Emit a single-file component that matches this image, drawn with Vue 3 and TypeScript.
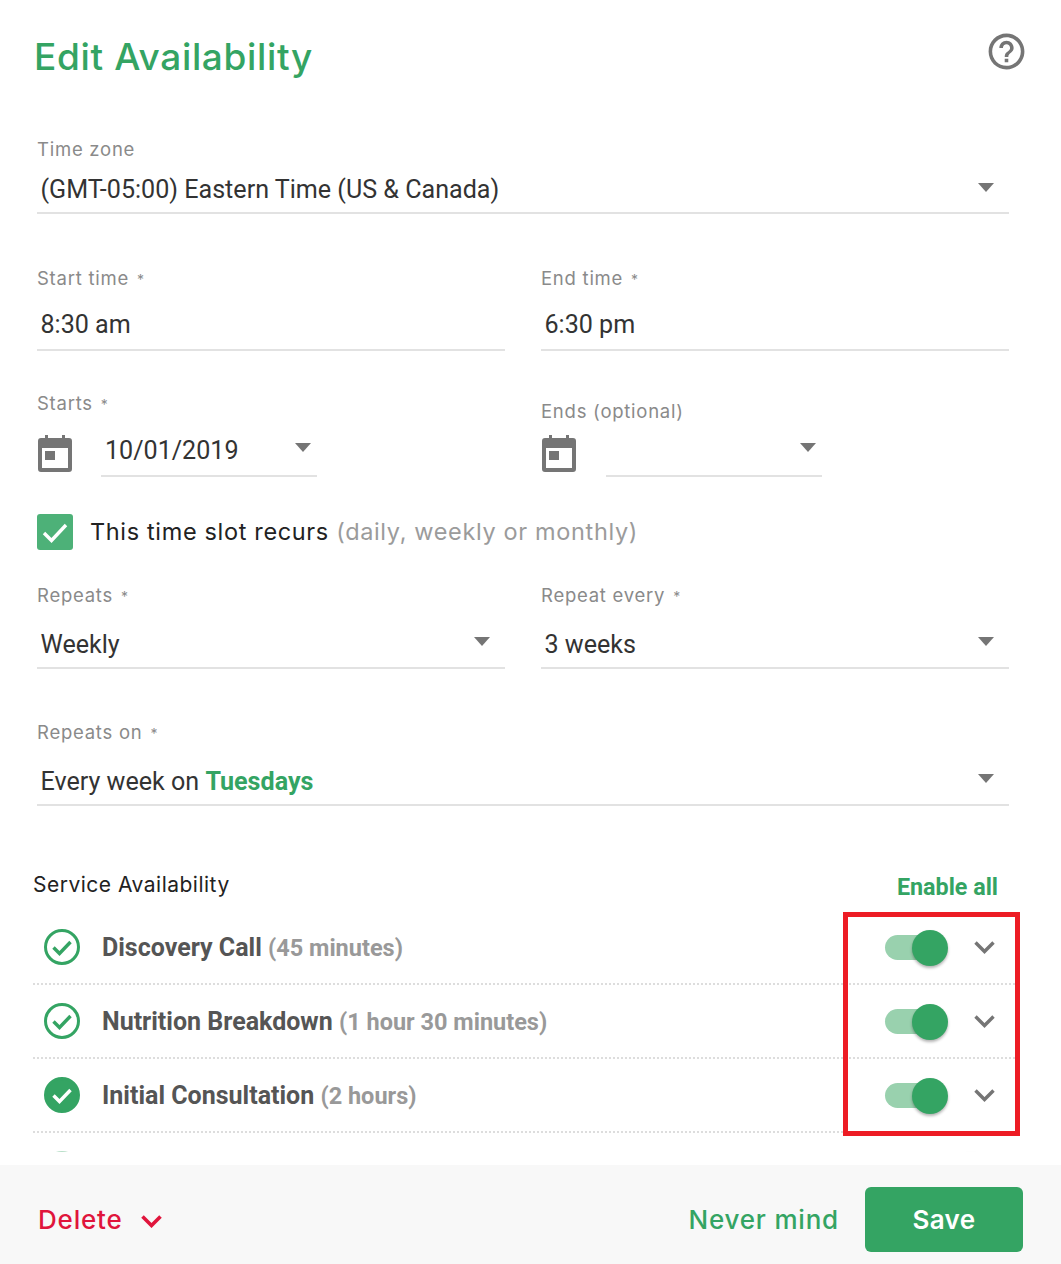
<script setup lang="ts">
interface Service { name: string; length: string; filled: boolean }
const services: Service[] = [
  { name: 'Discovery Call', length: '(45 minutes)', filled: false },
  { name: 'Nutrition Breakdown', length: '(1 hour 30 minutes)', filled: false },
  { name: 'Initial Consultation', length: '(2 hours)', filled: true },
]
</script>

<template>
  <div class="page">
    <div class="scroll">
      <header class="head">
        <h1 class="title">Edit Availability</h1>
        <svg class="help" viewBox="0 0 24 24" aria-hidden="true">
          <path fill="#757575" d="M11 18h2v-2h-2v2zm1-16C6.48 2 2 6.48 2 12s4.48 10 10 10 10-4.48 10-10S17.52 2 12 2zm0 18c-4.41 0-8-3.59-8-8s3.59-8 8-8 8 3.59 8 8-3.59 8-8 8zm0-14c-2.21 0-4 1.79-4 4h2c0-1.1.9-2 2-2s2 .9 2 2c0 2-3 1.75-3 5h2c0-2.25 3-2.5 3-5 0-2.21-1.79-4-4-4z"/>
        </svg>
      </header>

      <div class="form">
        <div class="field">
          <div class="label">Time zone</div>
          <div class="value tz">(GMT-05:00) Eastern Time (US &amp; Canada)<span class="caret"></span></div>
        </div>

        <div class="cols gap-time">
          <div class="field">
            <div class="label">Start time <span class="req">*</span></div>
            <div class="value time">8:30 am</div>
          </div>
          <div class="field">
            <div class="label">End time <span class="req">*</span></div>
            <div class="value time">6:30 pm</div>
          </div>
        </div>

        <div class="cols gap-date">
          <div class="field">
            <div class="label">Starts <span class="req">*</span></div>
            <div class="date">
              <svg class="cal" viewBox="0 0 34 37" aria-hidden="true">
                <path fill="#757575" d="M7 0h3v3h14V0h3v3h4a3 3 0 0 1 3 3v28a3 3 0 0 1-3 3H3a3 3 0 0 1-3-3V6a3 3 0 0 1 3-3h4V0zM4 13v20h26V13H4z"/>
                <rect fill="#757575" x="7" y="16" width="10" height="9"/>
              </svg>
              <div class="value dateval">10/01/2019<span class="caret"></span></div>
            </div>
          </div>
          <div class="field ends">
            <div class="label">Ends (optional)</div>
            <div class="date">
              <svg class="cal" viewBox="0 0 34 37" aria-hidden="true">
                <path fill="#757575" d="M7 0h3v3h14V0h3v3h4a3 3 0 0 1 3 3v28a3 3 0 0 1-3 3H3a3 3 0 0 1-3-3V6a3 3 0 0 1 3-3h4V0zM4 13v20h26V13H4z"/>
                <rect fill="#757575" x="7" y="16" width="10" height="9"/>
              </svg>
              <div class="value dateval short"><span class="caret"></span></div>
            </div>
          </div>
        </div>

        <div class="recur">
          <span class="box">
            <svg viewBox="0 0 36 36" aria-hidden="true"><path d="M7 19l7.5 7.5L29 11" fill="none" stroke="#fff" stroke-width="3.4"/></svg>
          </span>
          <span class="recur-text">This time slot recurs <span class="muted">(daily, weekly or monthly)</span></span>
        </div>

        <div class="cols gap-rep">
          <div class="field">
            <div class="label">Repeats <span class="req">*</span></div>
            <div class="value sel">Weekly<span class="caret"></span></div>
          </div>
          <div class="field">
            <div class="label">Repeat every <span class="req">*</span></div>
            <div class="value sel">3 weeks<span class="caret"></span></div>
          </div>
        </div>

        <div class="field gap-on">
          <div class="label">Repeats on <span class="req">*</span></div>
          <div class="value sel">Every week on <b class="green">Tuesdays</b><span class="caret"></span></div>
        </div>
      </div>

      <section class="services">
        <div class="svc-head">
          <span class="svc-title">Service Availability</span>
          <span class="enable">Enable all</span>
        </div>
        <div v-for="s in services" :key="s.name" class="row">
          <svg class="status" viewBox="0 0 36 36" aria-hidden="true">
            <circle cx="18" cy="18" r="16.5" :fill="s.filled ? '#34a463' : 'none'" stroke="#34a463" stroke-width="3"/>
            <path d="M9.5 18.5l6 6L26.5 13" fill="none" :stroke="s.filled ? '#fff' : '#34a463'" stroke-width="3.4"/>
          </svg>
          <span class="name">{{ s.name }} <span class="len">{{ s.length }}</span></span>
          <span class="toggle"><span class="knob"></span></span>
          <svg class="chev" viewBox="0 0 21 13" aria-hidden="true"><path d="M1.5 1.5l9 9 9-9" fill="none" stroke="#757575" stroke-width="3.4"/></svg>
        </div>
        <div class="row faded">
          <svg class="status" viewBox="0 0 36 36" aria-hidden="true">
            <circle cx="18" cy="18" r="16.5" fill="none" stroke="#34a463" stroke-width="3"/>
          </svg>
          <span class="name"></span>
          <span class="toggle"><span class="knob"></span></span>
        </div>
      </section>
    </div>

    <footer class="foot">
      <span class="delete">Delete
        <svg class="del-chev" viewBox="0 0 21 13" aria-hidden="true"><path d="M1.5 1.5l9 9 9-9" fill="none" stroke="#e0153c" stroke-width="3.6"/></svg>
      </span>
      <span class="never">Never mind</span>
      <button class="save" type="button">Save</button>
    </footer>

    <div class="mark"></div>
  </div>
</template>

<style>
html, body { margin: 0; background: #fff; }
</style>

<style scoped>
.page {
  position: relative;
  width: 1061px;
  height: 1264px;
  overflow: hidden;
  background: #fff;
  font-family: Roboto, sans-serif;
}
.scroll { height: 1152px; overflow: hidden; margin-bottom: 13px; }
.head {
  height: 137px;
  display: flex;
  justify-content: space-between;
  align-items: flex-start;
  padding: 0 33px 0 34px;
  box-sizing: border-box;
}
.title {
  margin: 36px 0 0;
  font: 500 37px/42px Inter, sans-serif;
  letter-spacing: 0.65px;
  color: #34a463;
}
.help { width: 43px; height: 43px; margin-top: 29.5px; }
.form { width: 972px; margin-left: 37px; }
.cols { display: grid; grid-template-columns: 468px 468px; column-gap: 36px; }
.gap-time { margin-top: 52px; }
.gap-date { margin-top: 40px; }
.gap-rep { margin-top: 33px; }
.gap-on { margin-top: 51px; }
.label {
  height: 24px;
  font: 400 18.5px/24px Inter, sans-serif;
  letter-spacing: 0.75px;
  color: #8a8a8a;
}
.req { font-size: 14px; margin-left: 2px; }
.value {
  position: relative;
  box-sizing: border-box;
  border-bottom: 2px solid #e2e2e2;
  padding-left: 3.5px;
  font: 400 25.1px/32px Roboto, sans-serif;
  color: #333;
}
.tz { height: 53px; padding-top: 13px; }
.time { height: 61px; padding-top: 19px; }
.sel { height: 62px; padding-top: 22px; }
.green { color: #34a463; font-weight: 700; }
.caret {
  position: absolute;
  right: 15px;
  top: 22px;
  width: 0;
  height: 0;
  border-left: 8.5px solid transparent;
  border-right: 8.5px solid transparent;
  border-top: 9px solid #757575;
}
.sel .caret { top: 30px; }
.date { display: flex; align-items: flex-start; height: 62px; }
.cal { width: 34px; height: 37px; margin: 20px 29px 0 1px; flex: none; }
.dateval { width: 216px; height: 62px; padding-top: 20px; padding-left: 4px; }
.dateval .caret { top: 28px; right: 6px; }
.ends { padding-top: 8px; }
.ends .date { height: 54px; }
.ends .cal { margin: 12px 30px 0 1px; }
.short { height: 54px; }
.short .caret { top: 20px; right: 6px; }
.recur { display: flex; align-items: center; margin-top: 37px; height: 36px; }
.box {
  width: 36px;
  height: 36px;
  border-radius: 3px;
  background: #4db178;
  margin-right: 17px;
  flex: none;
}
.box svg { display: block; width: 36px; height: 36px; }
.recur-text { font: 400 23.5px/30px Inter, sans-serif; letter-spacing: 0.65px; color: #222; }
.muted { color: #9b9b9b; }
.services { margin-left: 33px; width: 982px; margin-top: 60px; }
.svc-head { height: 45px; display: flex; justify-content: space-between; padding-right: 17px; }
.svc-title { font: 400 21px/38px Inter, sans-serif; letter-spacing: 0.5px; color: #222; }
.enable { font: 700 23.3px/42px Roboto, sans-serif; color: #34a463; }
.row {
  box-sizing: border-box;
  height: 74px;
  display: flex;
  align-items: center;
  border-bottom: 2px dotted #ddd;
  padding-left: 11px;
}
.faded { opacity: 0.35; }
.status { width: 36px; height: 36px; flex: none; margin-right: 22px; }
.name { flex: 1; padding-top: 2px; font: 700 25px/32px Roboto, sans-serif; color: #555; }
.len { color: #999; font-size: 23.5px; }
.toggle {
  position: relative;
  width: 45px;
  height: 25px;
  border-radius: 13px;
  background: #99d1ae;
  margin: 1px 44px 0 0;
  flex: none;
}
.knob {
  position: absolute;
  left: 27px;
  top: -5px;
  width: 36px;
  height: 36px;
  border-radius: 50%;
  background: #34a463;
  box-shadow: 0 2px 3px rgba(0, 0, 0, 0.3);
}
.chev { width: 21px; height: 13px; margin-right: 20px; flex: none; }
.foot {
  height: 99px;
  box-sizing: border-box;
  background: #f8f8f8;
  display: flex;
  align-items: flex-start;
  padding: 22px 38px 0;
}
.delete {
  flex: 1;
  display: flex;
  align-items: center;
  height: 65px;
  font: 500 26px/65px Inter, sans-serif;
  letter-spacing: 0.8px;
  color: #e0153c;
}
.del-chev { width: 21px; height: 13px; margin-left: 18px; margin-top: 4px; }
.never {
  height: 65px;
  margin-right: 26px;
  font: 500 26px/65px Inter, sans-serif;
  letter-spacing: 0.8px;
  color: #34a463;
}
.save {
  width: 158px;
  height: 65px;
  border: 0;
  border-radius: 6px;
  background: #34a463;
  color: #fff;
  font: 600 26px/65px Inter, sans-serif;
  letter-spacing: 0.4px;
  padding: 0;
}
.mark {
  position: absolute;
  left: 843px;
  top: 912px;
  width: 177px;
  height: 224px;
  box-sizing: border-box;
  border: 5px solid #ed1c24;
  pointer-events: none;
}
</style>
